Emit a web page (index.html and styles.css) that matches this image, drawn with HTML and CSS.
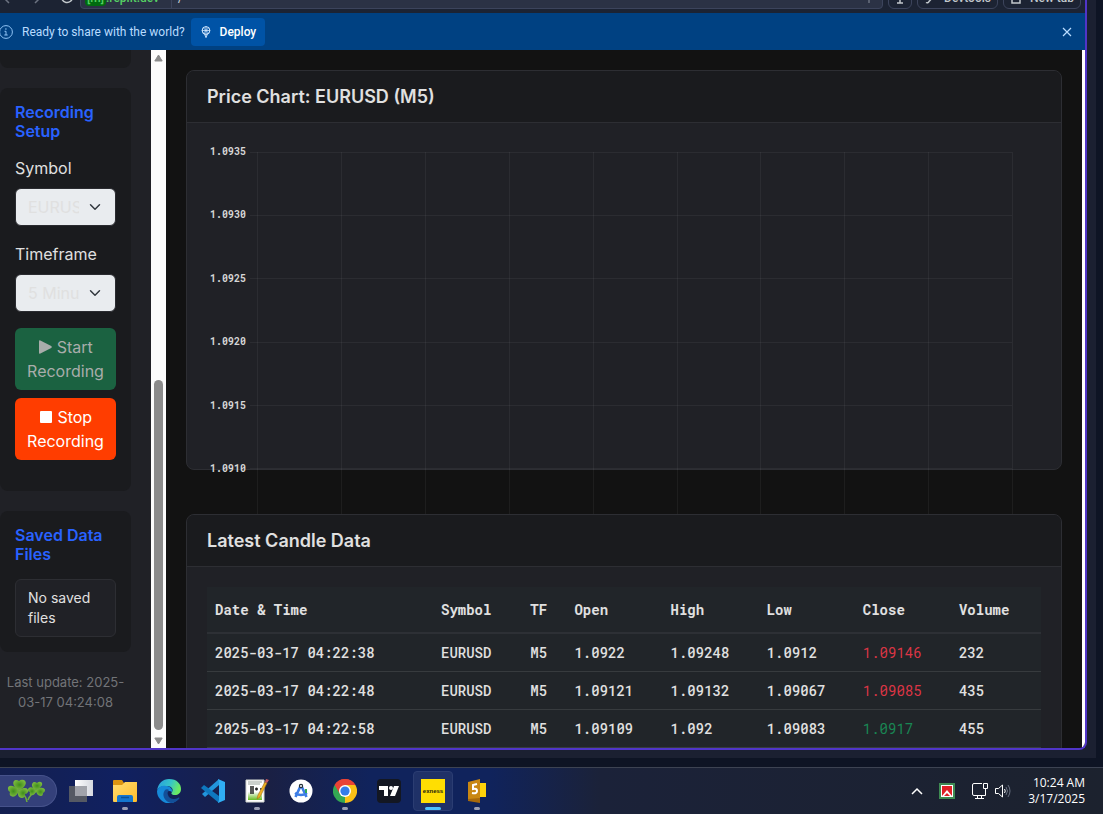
FILE: index.html
```html
<!DOCTYPE html>
<html lang="en">
<head>
<meta charset="utf-8">
<title>Price Chart: EURUSD (M5)</title>
<link rel="stylesheet" href="styles.css">
</head>
<body>
<div class="desktop">
  <div class="frame">
    <div class="browser">
      <div class="toolbar">
        <div class="nav-icons">
          <svg width="14" height="14" viewBox="0 0 14 14"><path d="M9 1 3 7l6 6" class="line dim"/></svg>
          <svg width="14" height="14" viewBox="0 0 14 14"><path d="m5 1 6 6-6 6" class="line dim"/></svg>
          <svg width="14" height="14" viewBox="0 0 14 14"><path d="M12.500 7A5.500 5.500 0 1 1 10 2.400" class="line"/></svg>
        </div>
        <div class="address"><span class="host"><b>[m]</b>.replit.dev</span><span class="path">/</span><svg class="address-mark" width="10" height="12" viewBox="0 0 10 12"><path d="M5 1v10" class="line dim"/></svg></div>
        <button class="tool" aria-label="Info"><svg width="10" height="12" viewBox="0 0 10 12"><path d="M5 2v9M2 11h6" class="line"/></svg></button>
        <button class="tool"><svg width="12" height="12" viewBox="0 0 12 12"><path d="M2 10.500a2 2 0 0 0 3-1L10 4" class="line"/></svg>Devtools</button>
        <button class="tool"><svg width="12" height="12" viewBox="0 0 12 12"><path d="M2 3h8v8H2z" class="line"/></svg>New tab</button>
      </div>
      <div class="banner">
        <svg class="info" width="14" height="14" viewBox="0 0 14 14"><circle cx="7" cy="7" r="6.400" fill="none" stroke="#8fc3f5"/><path d="M5.500 6.300H7V10M5.300 10h3.400" fill="none" stroke="#8fc3f5"/><circle cx="6.900" cy="4" r=".8" fill="#8fc3f5"/></svg>
        <span class="question">Ready to share with the world?</span>
        <button class="deploy"><svg width="12" height="12" viewBox="0 0 12 12" fill="none" stroke="#d7eaff"><circle cx="6" cy="4.500" r="3.900"/><path d="M2 4.500h8M6 .5v11M3.500 2l5 5M8.500 2l-5 5M4 7l2 4.500L8 7" stroke-width=".8"/></svg>Deploy</button>
        <button class="close" aria-label="Close"><svg width="10" height="10" viewBox="0 0 10 10"><path d="m1 1 8 8M9 1 1 9" fill="none" stroke="#b9dcff" stroke-width="1.200"/></svg></button>
      </div>
      <div class="page">
        <aside class="sidebar">
          <div class="panel panel-end"></div>
          <form class="panel recording">
            <h2>Recording Setup</h2>
            <label for="symbol">Symbol</label>
            <select id="symbol" disabled><option>EURUSD</option></select>
            <label for="timeframe">Timeframe</label>
            <select id="timeframe" disabled><option>5 Minutes</option></select>
            <button type="button" class="btn start" disabled><svg width="14" height="14" viewBox="0 0 14 14"><path d="M1 1.200Q1-.3 2.400.4l10.800 5.700q1.200.9 0 1.800L2.400 13.600Q1 14.300 1 12.800z" fill="currentColor"/></svg> Start Recording</button>
            <button type="button" class="btn stop"><svg width="14" height="14" viewBox="0 0 14 14"><rect x="1" y="1" width="12" height="12" rx="1" fill="currentColor"/></svg> Stop Recording</button>
          </form>
          <section class="panel">
            <h2>Saved Data Files</h2>
            <div class="files">No saved files</div>
          </section>
          <p class="updated">Last update: 2025-03-17 04:24:08</p>
        </aside>
        <div class="scrollbar">
          <svg width="9" height="8" viewBox="0 0 9 8"><path d="M4.500 1 8.200 7H.8z" fill="#8b8b8b" stroke="#8b8b8b" stroke-linejoin="round"/></svg>
          <div class="track"><div class="thumb"></div></div>
          <svg width="9" height="8" viewBox="0 0 9 8"><path d="M4.500 7 8.200 1H.8z" fill="#8b8b8b" stroke="#8b8b8b" stroke-linejoin="round"/></svg>
        </div>
        <main class="main">
          <section class="card chart-card">
            <h1>Price Chart: EURUSD (M5)</h1>
            <div class="card-body">
              <svg class="chart">
                <g class="grid">
                  <line x1="43" x2="96.500%" y1="9.500" y2="9.500"/>
                  <line x1="43" x2="96.500%" y1="72.500" y2="72.500"/>
                  <line x1="43" x2="96.500%" y1="135.500" y2="135.500"/>
                  <line x1="43" x2="96.500%" y1="199.500" y2="199.500"/>
                  <line x1="43" x2="96.500%" y1="262.500" y2="262.500"/>
                  <line x1="43" x2="96.500%" y1="325.500" y2="325.500"/>
                  <line x1="6.060%" x2="6.060%" y1="9" y2="380"/>
                  <line x1="16.130%" x2="16.130%" y1="9" y2="380"/>
                  <line x1="26.200%" x2="26.200%" y1="9" y2="380"/>
                  <line x1="36.270%" x2="36.270%" y1="9" y2="380"/>
                  <line x1="46.340%" x2="46.340%" y1="9" y2="380"/>
                  <line x1="56.420%" x2="56.420%" y1="9" y2="380"/>
                  <line x1="66.370%" x2="66.370%" y1="9" y2="380"/>
                  <line x1="76.440%" x2="76.440%" y1="9" y2="380"/>
                  <line x1="86.510%" x2="86.510%" y1="9" y2="380"/>
                  <line x1="96.580%" x2="96.580%" y1="9" y2="380"/>
                </g>
                <g class="ticks">
                  <text x="39" y="12">1.0935</text>
                  <text x="39" y="75">1.0930</text>
                  <text x="39" y="139">1.0925</text>
                  <text x="39" y="202">1.0920</text>
                  <text x="39" y="266">1.0915</text>
                  <text x="39" y="329">1.0910</text>
                </g>
              </svg>
            </div>
          </section>
          <section class="card">
            <h1>Latest Candle Data</h1>
            <div class="card-body">
              <table>
                <thead><tr><th class="c-date">Date &amp; Time</th><th class="c-symbol">Symbol</th><th class="c-tf">TF</th><th>Open</th><th>High</th><th>Low</th><th>Close</th><th class="c-volume">Volume</th></tr></thead>
                <tbody>
                  <tr><td>2025-03-17 04:22:38</td><td>EURUSD</td><td>M5</td><td>1.0922</td><td>1.09248</td><td>1.0912</td><td class="down">1.09146</td><td>232</td></tr>
                  <tr><td>2025-03-17 04:22:48</td><td>EURUSD</td><td>M5</td><td>1.09121</td><td>1.09132</td><td>1.09067</td><td class="down">1.09085</td><td>435</td></tr>
                  <tr><td>2025-03-17 04:22:58</td><td>EURUSD</td><td>M5</td><td>1.09109</td><td>1.092</td><td>1.09083</td><td class="up">1.0917</td><td>455</td></tr>
                </tbody>
              </table>
            </div>
          </section>
        </main>
        <div class="page-edge"></div>
      </div>
    </div>
  </div>
</div>
<footer class="taskbar">
  <button class="widget" aria-label="Widgets">
    <svg width="40" height="24" viewBox="0 0 40 24">
      <defs><radialGradient id="leaf"><stop offset="0" stop-color="#3f8d1c"/><stop offset="1" stop-color="#78b83c"/></radialGradient></defs>
      <path d="M13 13q6 3 7 10M30 12q-7 3-9 9" fill="none" stroke="#6fae3c" stroke-width="1.500"/>
      <g fill="url(#leaf)">
        <path d="M12 11C5 8 5 1 9 1q2 0 3 1 2-2 5-1c4 2 1 8-5 10z"/>
        <path d="M12 11C6 5 0 6 1 10q0 2 2 3-1 3 1 4c3 2 7-1 8-6z"/>
        <path d="M12 11c7-4 10-1 9 2q-1 2-3 2 0 4-3 4c-4 0-5-4-3-8z"/>
        <path d="M29 11c-5-2-5-7-2-8q2 0 3 1 2-2 4-1c3 2 0 6-5 8z"/>
        <path d="M29 11c-4-4-8-3-8 0q0 2 2 2-1 3 1 3c3 1 5-2 5-5z"/>
        <path d="M29 11c5-4 9-2 9 0q0 2-2 3 0 3-2 3c-3 0-5-3-5-6z"/>
      </g>
    </svg>
  </button>
  <button class="app" aria-label="Task view"><svg width="24" height="24" viewBox="0 0 24 24"><defs><linearGradient id="tv"><stop offset="0" stop-color="#fff"/><stop offset="1" stop-color="#d5d8df"/></linearGradient></defs><path d="M6 1h18v16H6z" fill="url(#tv)"/><path d="M0 7h18v16H0z" fill="#555963"/><path d="M6 7h12v10H6z" fill="#a1a3aa"/></svg></button>
  <button class="app running" aria-label="File Explorer"><svg width="24" height="24" viewBox="0 0 24 24"><defs><linearGradient id="fo" x2="1" y2="1"><stop offset="0" stop-color="#ffdc70"/><stop offset="1" stop-color="#ffbd2b"/></linearGradient></defs><path d="M0 2q0-1 1-1h8l2 3v4H0z" fill="#dc9410"/><path d="M0 6h9l3-3h12v19q0 1-1 1H1q-1 0-1-1z" fill="url(#fo)"/><path d="M4 23v-5q0-2 2-2h12q2 0 2 2v5z" fill="#1376cf"/><path d="M8 18.500h8" stroke="#0a5298" stroke-width="1.500"/></svg></button>
  <button class="app" aria-label="Edge"><svg width="24" height="24" viewBox="0 0 24 24"><defs><linearGradient id="ed" x2="1" y2=".3"><stop offset="0" stop-color="#279be0"/><stop offset=".6" stop-color="#36c5c8"/><stop offset="1" stop-color="#6bea63"/></linearGradient></defs><path d="M0 12C1 4 6 0 12 0c8 0 12 5 12 10 0 4-3 6-6 6-4 0-4-2-3-3 2-3-1-6-5-6C5 7 1 8 0 12z" fill="url(#ed)"/><path d="M0 12c1-4 5-6 9-5 4 0 7 3 6 6-4-3-8 1-6 5 2 4 8 4 12 2-3 4-8 5-12 4-5-2-9-6-9-12z" fill="#1689d9"/><path d="M8 11c-4 5 0 12 6 13 3 0 6-2 8-4 1-1 0-2-1-1-4 2-9 1-10-3-1-2 0-4 1-5-1-1-3-1-4 0z" fill="#134f98"/></svg></button>
  <button class="app" aria-label="Visual Studio Code"><svg width="24" height="24" viewBox="0 0 24 24"><path d="m1 15 17-15v6L4 18z" fill="#2295dc"/><path d="m1 8 2-2 15 11v7L0 9z" fill="#0e78bf"/><path d="m17 0 7 3v18l-7 3 1-3V3z" fill="#30aef4"/></svg></button>
  <button class="app running" aria-label="Notepad++"><svg width="24" height="24" viewBox="0 0 24 24"><defs><linearGradient id="np" x2="0" y2="1"><stop offset=".4" stop-color="#fff"/><stop offset="1" stop-color="#68bd21"/></linearGradient></defs><path d="M1 1h18v22H1z" fill="#fff" stroke="#d5d8d2"/><path d="M3 7h14v14H3z" fill="url(#np)"/><path d="M3 3h14M3 5h12" stroke="#9aa39b"/><path d="M6 7v8M8 7v8M10 10h3M15 10h2M11.500 8.500v3" stroke="#222" stroke-width="1.500"/><path d="m20 3 2 1-7 14-3 2 1-4z" fill="#efb324" stroke="#a66c16" stroke-width=".6"/><path d="m21 0 3 1-2 3-2-1z" fill="#c55b61"/></svg></button>
  <button class="app" aria-label="Android Studio"><svg width="24" height="24" viewBox="0 0 24 24"><circle cx="12" cy="12" r="11.500" fill="#fff"/><path d="M12 6 6.500 18M12 6l5.500 12M6 14q6 4 12 0" fill="none" stroke="#3d7de5" stroke-width="2.600"/><path d="M16 10h2v4h-2z" fill="#33a957"/><circle cx="12" cy="7" r="1.600" fill="#fff" stroke="#263238" stroke-width="1.200"/></svg></button>
  <button class="app running" aria-label="Chrome"><svg width="24" height="24" viewBox="0 0 24 24"><path d="M12 12 1.600 6A12 12 0 0 1 22.400 6z" fill="#ea4335"/><path d="M12 12 22.400 6A12 12 0 0 1 12 24z" fill="#fbc116"/><path d="M12 12v12A12 12 0 0 1 1.600 6z" fill="#34a853"/><path d="M12 6h10.400L17 15l-5 9z" fill="#fbc116"/><path d="M1.600 6 7 15l5-3V6h10.400A12 12 0 0 0 1.600 6z" fill="#ea4335"/><circle cx="12" cy="12" r="6" fill="#fff"/><circle cx="12" cy="12" r="4.600" fill="#347de9"/></svg></button>
  <button class="app" aria-label="TradingView"><svg width="24" height="24" viewBox="0 0 24 24"><rect width="24" height="24" rx="4" fill="#131722"/><path d="M2 7h9v10H7v-6H2zM17 7h5l-4 10h-5z" fill="#fff"/><circle cx="14" cy="9" r="2" fill="#fff"/></svg></button>
  <button class="app active" aria-label="Exness"><span class="exness">exness</span></button>
  <button class="app running" aria-label="MetaTrader 5"><svg width="24" height="24" viewBox="0 0 24 24"><path d="M12 4h9v14h-9z" fill="#ffd30b"/><path d="m3 3 12-3v20L3 20z" fill="#c98712"/><path d="m3 20 12-1v5L3 22z" fill="#a8690b"/><path d="M12 5 8 6v4q4-1 4 2 0 3-5 2" fill="none" stroke="#fff" stroke-width="2"/></svg></button>
  <div class="tray">
    <button aria-label="Show hidden icons"><svg width="12" height="8" viewBox="0 0 12 8"><path d="m1 7 5-5 5 5" fill="none" stroke="#fff" stroke-width="1.500"/></svg></button>
    <button aria-label="AnyDesk"><svg width="16" height="16" viewBox="0 0 16 16"><path d="M1 1h14v14H1z" fill="#fff" stroke="#3e8a52" stroke-width="2"/><path d="M3 3h10v10l-5-6-5 6z" fill="#df2026"/><path d="m5 13 3-3 3 3z" fill="#df2026"/></svg></button>
    <button class="system" aria-label="Network and volume"><svg width="18" height="18" viewBox="0 0 18 18" fill="none" stroke="#fff"><path d="M11 1.500H3q-1.500 0-1.500 1.500v9q0 1.500 1.500 1.500h11.500V8M4 16.500h9M6.500 14v2M10.500 14v2M12.500 1.500h4v5h-4zM14.500 7v3"/></svg><svg width="18" height="16" viewBox="0 0 18 16" fill="none" stroke="#fff"><path d="M1.500 5.500h3l4-3.500v12l-4-3.500h-3zM10.500 6q1.500 2 0 4"/><path d="M12 4q3 4 0 8M14 2q4 6 0 12" stroke="#697080"/></svg></button>
    <div class="clock">10:24 AM<br>3/17/2025</div>
  </div>
</footer>
</body>
</html>
```
FILE: styles.css
```css
* { box-sizing: border-box; }
html, body { height: 100%; }
body {
  margin: 0;
  display: flex;
  flex-direction: column;
  overflow: hidden;
  background: #0e1424;
  color: #e0e0e0;
  font-family: Inter, "Liberation Sans", sans-serif;
  font-size: 16px;
  line-height: 24px;
}
button { font: inherit; color: inherit; border: 0; background: none; padding: 0; }
svg { flex: none; }
.desktop { flex: 1; min-height: 0; padding: 0 7px 9px 0; display: flex; }
.frame { flex: 1; min-width: 0; display: flex; padding: 0 9px 8px 0; background: #1b2031; }
.browser {
  flex: 1;
  min-width: 0;
  display: flex;
  flex-direction: column;
  overflow: hidden;
  border: solid #5035c8;
  border-width: 0 2px 2px 0;
  border-bottom-right-radius: 8px;
}

.toolbar {
  flex: none;
  height: 13px;
  display: flex;
  align-items: flex-end;
  gap: 5px;
  padding: 0 4px 4px 0;
  overflow: hidden;
  background: #1c2333;
  color: #c2c8cc;
  font: 500 12px/16px Roboto, sans-serif;
}
.line { fill: none; stroke: #c2c8cc; stroke-width: 1.5; }
.dim { stroke: #6b7280; }
.nav-icons { width: 75px; display: flex; gap: 16px; padding-bottom: 5px; }
.address {
  flex: 1;
  height: 22px;
  display: flex;
  align-items: center;
  border: 1px solid #3c445c;
  border-radius: 4px;
  background: #2b3245;
}
.host { width: 91px; height: 20px; padding: 2px 4px; border-right: 1px solid #3c445c; color: #56cf64; }
.host b { padding: 0 2px 1px; border-radius: 4px; background: #006b0f; font-weight: 500; }
.path { padding-left: 6px; }
.address-mark { margin: 0 8px 0 auto; }
.tool {
  height: 22px;
  display: flex;
  align-items: center;
  gap: 8px;
  padding: 0 6px;
  border: 1px solid #3c445c;
  border-radius: 6px;
}

.banner {
  flex: none;
  display: flex;
  align-items: center;
  height: 37px;
  background: #004182;
  color: #b9dcff;
  font: 12px/16px Roboto, sans-serif;
}
.info { margin-left: -1px; }
.question { margin: 0 6px 0 9px; }
.deploy {
  height: 28px;
  display: flex;
  align-items: center;
  gap: 8px;
  padding: 0 9px;
  border-radius: 4px;
  background: #0053a6;
  color: #fff;
  font-weight: 500;
}
.close { display: flex; margin: 0 13px 0 auto; }

.page { flex: 1; min-height: 0; display: flex; background: #121212; }
.sidebar { flex: none; width: 151px; padding-right: 20px; overflow: hidden; background: #202126; }
.panel { margin-bottom: 20px; padding: 15px; border-radius: 8px; background: #1a1b1e; }
.panel-end { height: 18px; padding: 0; border-radius: 0 0 8px 8px; }
.recording { padding-bottom: 31px; }
.panel h2 { margin: 0 0 15px; color: #2962ff; font-size: 16px; font-weight: 600; line-height: 19px; }
.panel label { display: block; margin-bottom: 8px; }
.panel select {
  display: block;
  width: 100%;
  height: 38px;
  margin-bottom: 16px;
  padding: 0 36px 0 12px;
  appearance: none;
  border: 1px solid #2a2b30;
  border-radius: 6px;
  background: #e9ecef url("data:image/svg+xml,%3Csvg xmlns='http://www.w3.org/2000/svg' viewBox='0 0 16 16'%3E%3Cpath fill='none' stroke='%23343a40' stroke-linecap='round' stroke-linejoin='round' stroke-width='2' d='m2 5 6 6 6-6'/%3E%3C/svg%3E") no-repeat right 12px center / 16px 12px;
  color: #e0e0e0;
  font: inherit;
  opacity: 1;
}
.btn { display: block; width: 100%; padding: 7px 12px; border-radius: 6px; }
.btn svg { vertical-align: -1px; }
.start { margin-bottom: 8px; background: #1b6241; color: #a9adab; }
.stop { background: #ff3d00; color: #fff; }
.files { padding: 8px 12px; border: 1px solid #2d2e33; border-radius: 6px; background: #202126; font-size: 14px; line-height: 20px; }
.updated { margin: 0; color: #727478; font-size: 13px; line-height: 20px; text-align: center; }

.scrollbar { flex: none; width: 15px; display: flex; flex-direction: column; align-items: center; padding: 4px 0 3px; background: #fcfcfc; }
.track { flex: 1; width: 9px; display: flex; flex-direction: column; justify-content: flex-end; padding: 6px 0 7px; }
.thumb { height: 52.9%; border-radius: 5px; background: #8b8b8b; }

.main { flex: 1; min-width: 0; display: flex; flex-direction: column; gap: 44px; padding: 20px 20px 0; overflow: hidden; }
.card { flex: none; border: 1px solid #2d2e33; border-radius: 8px; background: #202126; }
.card h1 {
  margin: 0;
  padding: 14px 20px 13px;
  border-bottom: 1px solid #2d2e33;
  border-radius: 7px 7px 0 0;
  background: #1a1b1e;
  font-size: 18px;
  font-weight: 600;
  line-height: 24px;
}
.card-body { padding: 20px; }
.chart-card { height: 400px; }
.chart { display: block; width: 100%; height: 371px; overflow: visible; }
.grid line { stroke: #fff; stroke-opacity: .05; shape-rendering: crispEdges; }
.ticks text { fill: #d6d6d6; font: bold 10px "Roboto Mono", "Liberation Mono", monospace; text-anchor: end; }
.page-edge { width: 3px; background: #fff; }

table {
  width: 100%;
  table-layout: fixed;
  border-collapse: separate;
  border-spacing: 0;
  background: #212529;
  font: 500 14px/20px "Roboto Mono", "DejaVu Sans Mono", monospace;
}
th, td { padding: 0 8px; text-align: left; white-space: nowrap; }
th { height: 47px; border-bottom: 2px solid #2d3035; font-weight: 700; }
td { height: 38px; border-bottom: 1px solid #373b3e; }
.c-date { width: 27.1%; }
.c-symbol { width: 10.7%; }
.c-tf { width: 5.3%; }
.c-volume { width: 10.8%; }
.down, .up { font-weight: 400; }
.down { color: #dc3545; }
.up { color: #198754; }

.taskbar {
  flex: none;
  height: 47px;
  display: flex;
  align-items: center;
  gap: 4px;
  border-top: 1px solid #3d4352;
  background: linear-gradient(90deg, #142050 0, #102060 120px, #1a2044 270px, #10235c 370px, #10235c 490px, #1b2239 600px, #1c222e 100%);
}
.widget {
  width: 57px;
  height: 32px;
  display: flex;
  align-items: center;
  padding-left: 7px;
  border: 1px solid #46528b;
  border-left: 0;
  border-radius: 0 16px 16px 0;
  background: #34407a;
}
.app { position: relative; width: 40px; height: 40px; display: grid; place-items: center; border-radius: 4px; }
.running::after, .active::after {
  content: "";
  position: absolute;
  bottom: 1px;
  left: 17px;
  width: 6px;
  height: 3px;
  border-radius: 2px;
  background: #9a9eb4;
}
.active { border: 1px solid #2b3d72; background: #1f3167; }
.active::after { bottom: 0; left: 11px; width: 16px; background: #4cc2ff; }
.exness { width: 24px; height: 24px; background: #ffde02; color: #25250f; font: bold 6px/24px "Liberation Sans", sans-serif; text-align: center; }
.tray { margin-left: auto; display: flex; align-items: center; gap: 16px; padding-right: 18px; color: #fff; }
.tray button { display: flex; align-items: center; }
.system { gap: 5px; }
.clock { font: 12px/16px "Open Sans", sans-serif; text-align: right; }
```
